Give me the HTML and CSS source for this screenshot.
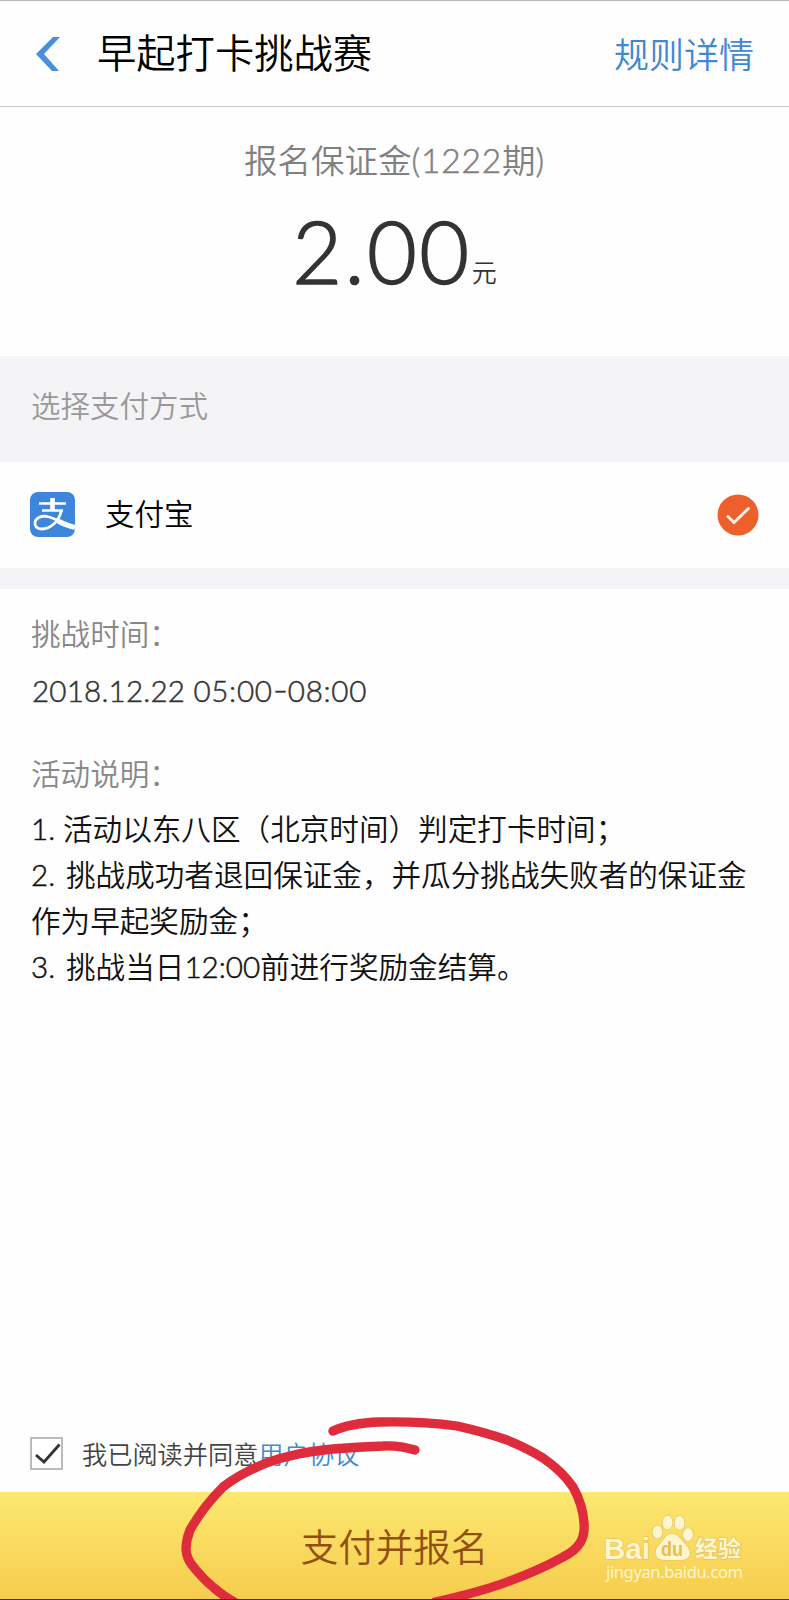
FILE: index.html
```html
<!DOCTYPE html>
<html lang="zh-CN">

<head>
    <meta charset="UTF-8">
    <title>早起打卡挑战赛</title>
    <link rel="stylesheet" href="styles.css">
</head>

<body>
    <div class="page">
        <header class="header">
            <svg class="back" width="24" height="36" viewBox="0 0 24 36">
                <path d="M17 1H24L8 18L23 35H16L0 18Z" fill="#4a90d9"/>
            </svg>
            <h1 class="title">早起打卡挑战赛</h1>
            <a class="rules">规则详情</a>
        </header>

        <section class="deposit">
            <div class="deposit-label">报名保证金<span class="period">(1222</span>期<span class="period">)</span></div>
            <div class="price"><span class="amount">2.00</span><span class="unit">元</span></div>
        </section>

        <div class="section-title">选择支付方式</div>

        <div class="pay-method">
            <svg class="pay-icon" width="45" height="45" viewBox="0 0 45 45">
                <rect width="45" height="45" rx="8" fill="#3d86dc"/>
                <g fill="none" stroke="#fff">
                    <path d="M9 11.500H36M12 18.500H33" stroke-width="2.6"/>
                    <path d="M22.500 6V19" stroke-width="4.6"/>
                    <path d="M31.500 18C29 30 20 37 12 37C6.500 37 4.500 34 5 30.500C5.500 26 11 23.500 17 24.500C26 26.500 33 32 44.500 34.500" stroke-width="2.8"/>
                    <path d="M28 29Q35 33 45 35.500" stroke-width="5"/>
                </g>
            </svg>
            <span class="pay-name">支付宝</span>
            <svg class="selected" width="42" height="42" viewBox="0 0 42 42">
                <circle cx="21" cy="21" r="20.500" fill="#ee602b"/>
                <path d="M11 22.500L17 28.500L31.500 14.500" fill="none" stroke="#fff0e4" stroke-width="3" stroke-linecap="round"/>
            </svg>
        </div>

        <div class="divider"></div>

        <section class="info">
            <div class="info-label">挑战时间：</div>
            <div class="time">2018.12.22 <span class="clock">05:00</span><span class="dash">-</span><span class="clock">08:00</span></div>
            <div class="info-label">活动说明：</div>
            <div class="desc">
                <p><span class="num">1.</span>活动以东八区（北京时间）判定打卡时间；</p>
                <p><span class="num wide">2.</span>挑战成功者退回保证金，并瓜分挑战失败者的保证金</p>
                <p>作为早起奖励金；</p>
                <p><span class="num wide">3.</span>挑战当日<span class="hour">12:00</span>前进行奖励金结算。</p>
            </div>
        </section>

        <div class="agree">
            <svg class="checkbox" width="33" height="33" viewBox="0 0 33 33">
                <rect x="1" y="1" width="31" height="31" fill="#fff" stroke="#aaa" stroke-width="1.6"/>
                <path d="M6 18L14 25L29.500 7.500" fill="none" stroke="#333" stroke-width="2.8"/>
            </svg>
            <span>我已阅读并同意<a class="protocol">用户协议</a></span>
        </div>

        <div class="submit">支付并报名</div>

        <!-- hand drawn circle round the button -->
        <svg class="marker" width="789" height="200" viewBox="0 1400 789 200">
            <path d="M333 1431Q350 1423 380 1422Q420 1421 457 1426Q484 1432 507 1440Q527 1448 543 1458Q562 1471 573 1487Q583 1505 584 1523Q585 1535 580 1543Q575 1551 563 1557Q540 1570 507 1582Q480 1592 435 1602"/>
            <path d="M415 1450Q398 1445 383 1446Q357 1447 333 1449Q310 1451 290 1456Q272 1460 257 1467Q237 1476 223 1487Q203 1507 190 1530Q186 1540 186 1550Q187 1559 192 1565Q202 1578 213 1587Q223 1596 236 1603"/>
        </svg>

        <svg class="watermark" width="150" height="75" viewBox="600 1510 150 75">
            <g class="wm-shape">
                <ellipse cx="657.500" cy="1532" rx="5" ry="6.500"/>
                <ellipse cx="667.500" cy="1522.500" rx="5" ry="7"/>
                <ellipse cx="679.500" cy="1523" rx="5" ry="7"/>
                <ellipse cx="688" cy="1534.500" rx="5" ry="6.500"/>
                <path d="M672 1534C679 1534 681 1540 686 1545C693 1552 690 1560 681 1560H664C655 1560 653 1551 659 1545C664 1540 665 1534 672 1534Z"/>
            </g>
            <text class="wm-bai" x="604" y="1559" textLength="46" lengthAdjust="spacingAndGlyphs">Bai</text>
            <text class="wm-du" x="661" y="1556" textLength="22" lengthAdjust="spacingAndGlyphs">du</text>
            <text class="wm-jy" x="695" y="1557" textLength="46">经验</text>
            <text class="wm-url" x="606" y="1578" textLength="137">jingyan.baidu.com</text>
        </svg>
    </div>
</body>

</html>
```
FILE: styles.css
```css
* {
    box-sizing: border-box;
}

body {
    margin: 0;
    background: #fefefe;
    font-family: Lato, "Noto Sans CJK SC", sans-serif;
    font-weight: 350;
    color: #1a1a1a;
}

.page {
    position: relative;
    display: flex;
    flex-direction: column;
    width: 789px;
    height: 1600px;
    overflow: hidden;
    border-top: 1px solid #b8b8b8;
    border-bottom: 1px solid #3a3020;
    white-space: nowrap;
}

.header {
    display: flex;
    align-items: center;
    height: 106px;
    padding: 0 35px 0 36px;
    border-bottom: 1px solid #c4c4c6;
}

.title {
    margin: 0 auto 0 37px;
    padding-bottom: 2px;
    font-size: 39.3px;
    font-weight: 350;
    line-height: 102px;
    color: #000;
}

.rules {
    padding-bottom: 2px;
    font-size: 35px;
    color: #4188d2;
}

.deposit {
    height: 249px;
    padding-top: 29px;
    text-align: center;
}

.deposit-label {
    font-size: 33.5px;
    line-height: 48px;
    color: #808080;
}

.period {
    letter-spacing: 0.8px;
    -webkit-text-stroke: 0.5px;
}

.price {
    display: flex;
    justify-content: center;
    align-items: baseline;
    padding-top: 15px;
    line-height: 104px;
    color: #333;
}

.amount {
    font-size: 86px;
    letter-spacing: 2.4px;
    -webkit-text-stroke: 1.6px;
}

.unit {
    padding-bottom: 2px;
    font-size: 25px;
    transform: translateY(-2px);
}

.section-title {
    height: 106px;
    padding-left: 31px;
    background: #f4f4f6;
    font-size: 29.5px;
    line-height: 99px;
    color: #999;
}

.pay-method {
    display: flex;
    align-items: center;
    height: 106px;
    padding: 0 30px 1px;
}

.pay-name {
    margin: 0 auto 0 30px;
    padding-bottom: 6px;
    font-size: 29.5px;
    color: #000;
}

.divider {
    height: 21px;
    background: #f4f4f6;
}

.info {
    padding: 21px 0 0 31px;
    font-size: 29.6px;
}

.info-label {
    line-height: 48px;
    color: #888;
}

.time {
    margin: 9px 0 35px;
    padding-left: 1px;
    line-height: 48px;
    letter-spacing: 0.2px;
    color: #333;
    -webkit-text-stroke: 0.5px;
}

.clock {
    letter-spacing: 0.7px;
}

.dash {
    display: inline-block;
    margin: 0 2px;
    transform: translateY(-2px) scaleX(1.4);
}

.desc {
    margin-top: 8px;
    line-height: 46px;
    color: #111;
}

.desc p {
    margin: 0;
}

.num {
    display: inline-block;
    width: 32px;
    -webkit-text-stroke: 0.5px;
}

.num.wide {
    width: 35px;
}

.hour {
    -webkit-text-stroke: 0.5px;
}

.agree {
    display: flex;
    align-items: center;
    gap: 19px;
    height: 78px;
    margin-top: auto;
    padding-left: 30px;
    font-size: 25.2px;
    color: #444;
}

.protocol {
    color: #4188d2;
}

.submit {
    height: 107px;
    background: linear-gradient(#fce870, #f6cd4e);
    font-size: 37.5px;
    line-height: 109px;
    text-align: center;
    color: #934f12;
}

.marker {
    position: absolute;
    left: 0;
    bottom: -1px;
    fill: none;
    stroke: #df2c3c;
    stroke-width: 9.3;
    stroke-linecap: round;
    stroke-linejoin: round;
}

.watermark {
    position: absolute;
    left: 600px;
    top: 1509px;
    fill: #fff6d0;
}

.wm-shape,
.wm-bai,
.wm-jy {
    stroke: #e3be5c;
    stroke-width: 1.2;
    paint-order: stroke;
}

.wm-bai {
    font: bold 30px "Liberation Sans", sans-serif;
}

.wm-du {
    font: bold 20px "Liberation Sans", sans-serif;
    fill: #e8bd4c;
}

.wm-jy {
    font: bold 23px "Noto Sans CJK SC", sans-serif;
}

.wm-url {
    font: 16.5px "Noto Sans", sans-serif;
}
```
